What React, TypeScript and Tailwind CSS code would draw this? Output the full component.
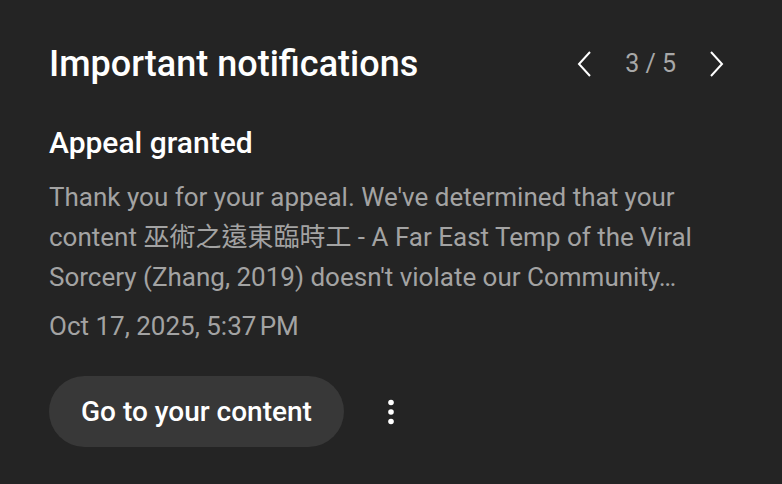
import React from "react";

export default function App() {
  return (
    <div className="w-[782px] h-[484px] overflow-hidden bg-[#242424]" style={{ fontFamily: "Roboto, 'Noto Sans CJK TC', sans-serif" }}>
      <div className="w-[806px] h-[508px] -ml-[12px] -mt-[12px] rounded-[32px] border border-[#3a3a3a] bg-[#242424] pl-[60px] pr-[68px] pt-[53px]">
        <div className="flex items-center justify-between h-[44px]">
          <div className="text-[36px] leading-[44px] font-medium text-white">Important notifications</div>
          <div className="flex items-center gap-[33px]">
            <svg width="16" height="26" viewBox="0 0 16 26" fill="none" stroke="white" strokeWidth="2">
              <path d="M14 1 L3 13 L14 25" />
            </svg>
            <span className="text-[25px] leading-[30px] text-[#a8a8a8]">3 / 5</span>
            <svg width="16" height="26" viewBox="0 0 16 26" fill="none" stroke="white" strokeWidth="2">
              <path d="M2 1 L13 13 L2 25" />
            </svg>
          </div>
        </div>
        <div className="mt-[39px] text-[30px] font-medium text-white leading-[36px]">Appeal granted</div>
        <div className="mt-[16px] text-[26px] leading-[40px] text-[#a3a3a3] w-[680px]">
          Thank you for your appeal. We've determined that your content 巫術之遠東臨時工 - A Far East Temp of the Viral Sorcery (Zhang, 2019) doesn't violate our Community…
        </div>
        <div className="mt-[9px] text-[26px] leading-[40px] text-[#a3a3a3]">Oct 17, 2025, 5:37{"\u202F"}PM</div>
        <div className="mt-[30px] flex items-center gap-[43px]">
          <button className="h-[71px] px-[32px] rounded-full bg-[#383838] text-white text-[28px] leading-[36px] font-medium">Go to your content</button>
          <svg width="8" height="26" viewBox="0 0 8 26" fill="white">
            <circle cx="4" cy="3.5" r="2.8" />
            <circle cx="4" cy="13" r="2.8" />
            <circle cx="4" cy="22.5" r="2.8" />
          </svg>
        </div>
      </div>
    </div>
  );
}
